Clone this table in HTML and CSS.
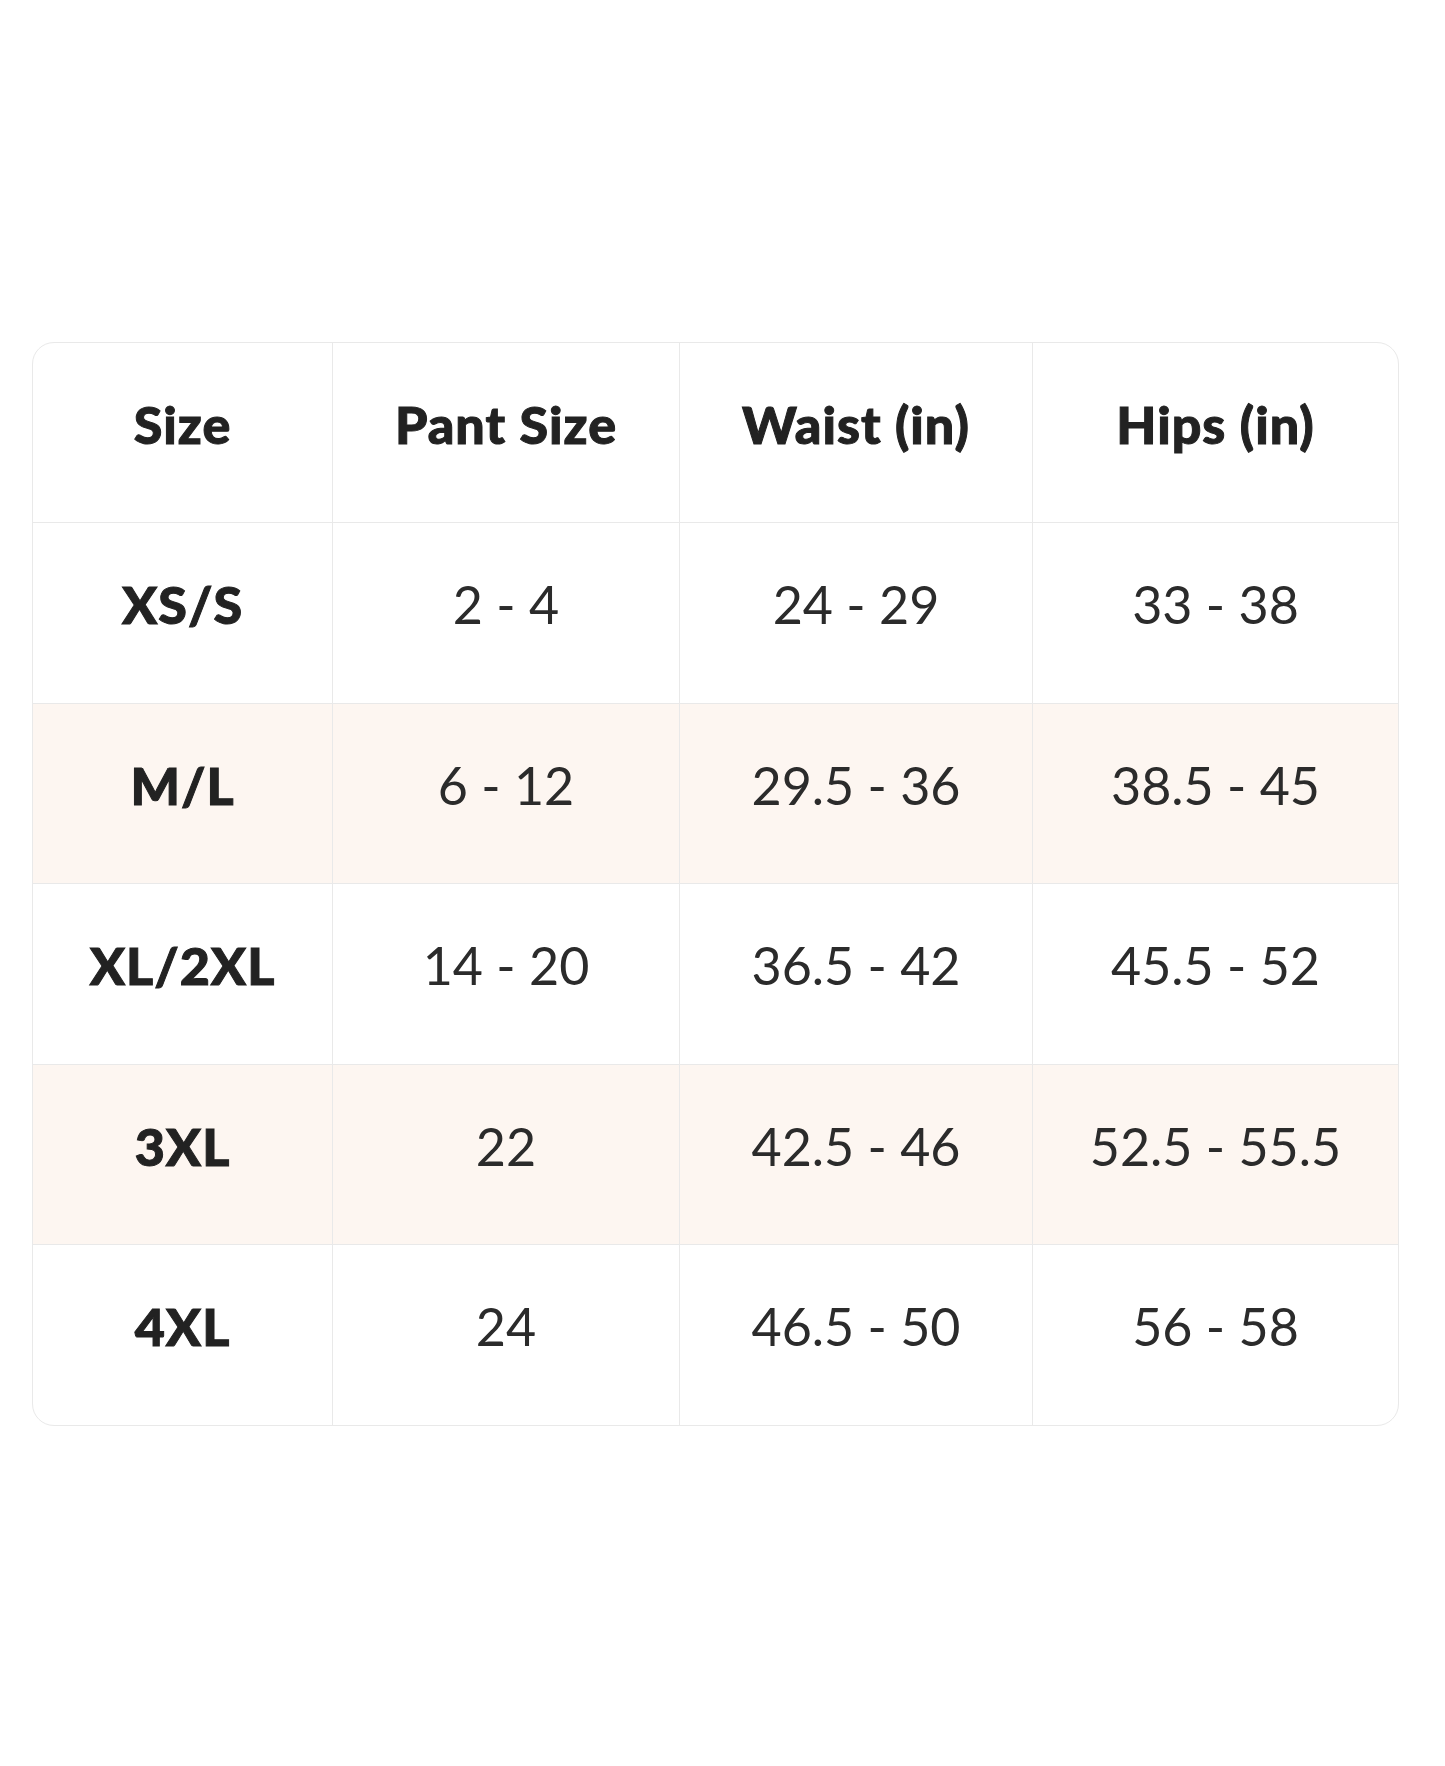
FILE: index.html
```html
<!DOCTYPE html>
<html lang="en">
<head>
<meta charset="utf-8">
<title>Size Chart</title>
<link rel="stylesheet" href="styles.css">
</head>
<body>
<main class="page">
  <div class="chart">
    <div class="row head">
      <div class="cell">Size</div>
      <div class="cell">Pant Size</div>
      <div class="cell">Waist (in)</div>
      <div class="cell">Hips (in)</div>
    </div>
    <div class="row">
      <div class="cell label">XS/S</div>
      <div class="cell">2 - 4</div>
      <div class="cell">24 - 29</div>
      <div class="cell">33 - 38</div>
    </div>
    <div class="row alt">
      <div class="cell label">M/L</div>
      <div class="cell">6 - 12</div>
      <div class="cell">29.5 - 36</div>
      <div class="cell">38.5 - 45</div>
    </div>
    <div class="row">
      <div class="cell label">XL/2XL</div>
      <div class="cell">14 - 20</div>
      <div class="cell">36.5 - 42</div>
      <div class="cell">45.5 - 52</div>
    </div>
    <div class="row alt">
      <div class="cell label">3XL</div>
      <div class="cell">22</div>
      <div class="cell">42.5 - 46</div>
      <div class="cell">52.5 - 55.5</div>
    </div>
    <div class="row">
      <div class="cell label">4XL</div>
      <div class="cell">24</div>
      <div class="cell">46.5 - 50</div>
      <div class="cell">56 - 58</div>
    </div>
  </div>
</main>
</body>
</html>
```
FILE: styles.css
```css
html, body {
  margin: 0;
  padding: 0;
  background: #ffffff;
}

body {
  font-family: Lato, "Noto Sans", "Liberation Sans", sans-serif;
  color: #262626;
}

.page {
  width: 1445px;
  height: 1766px;
  padding: 342px 0 0 32px;
  box-sizing: border-box;
}

.chart {
  width: 1367px;
  border: 1.5px solid #e9e9e9;
  border-radius: 22px;
  overflow: hidden;
  box-sizing: border-box;
}

.row {
  display: grid;
  grid-template-columns: 299px 347px 353px 1fr;
  height: 180.5px;
  border-top: 1.5px solid #e9e9e9;
  box-sizing: border-box;
}

.row:first-child {
  border-top: none;
  height: 179px;
}

.row.alt {
  background: #fdf6f1;
}

.cell {
  display: flex;
  align-items: center;
  justify-content: center;
  padding-bottom: 17px;
  box-sizing: border-box;
  font-size: 52px;
  font-weight: 400;
  color: #2b2b2b;
  border-left: 1.5px solid #e9e9e9;
}

.cell:first-child {
  border-left: none;
}

.head .cell,
.cell.label {
  font-weight: 900;
  font-size: 52px;
  letter-spacing: 1px;
  color: #222222;
  -webkit-text-stroke: 1px #222222;
}
```
